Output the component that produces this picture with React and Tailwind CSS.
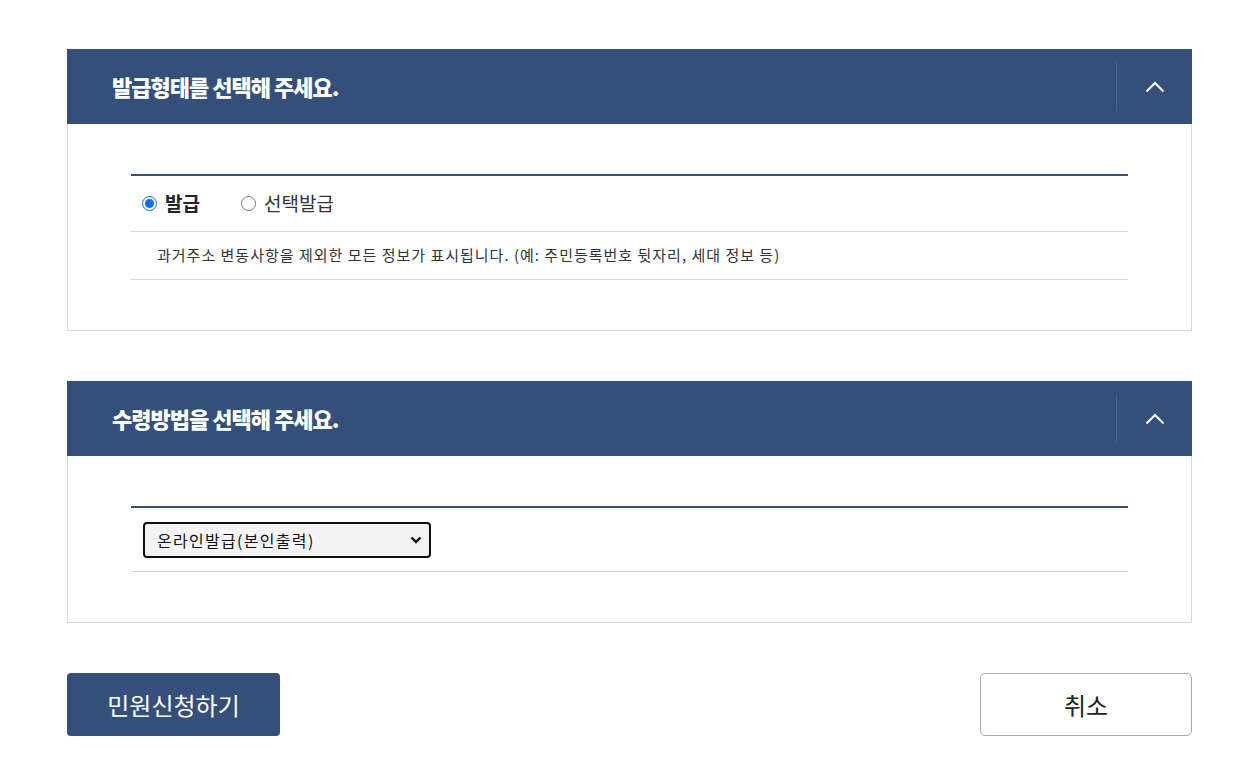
import { useState } from "react";

const font = { fontFamily: '"Noto Sans CJK KR", "Noto Sans", sans-serif' };

function Chevron() {
	return (
		<svg width="20" height="12" viewBox="0 0 20 12" fill="none">
			<path d="M1.5 10.5 L10 2 L18.5 10.5" stroke="white" strokeWidth="2" />
		</svg>
	);
}

function Section({ title, children }) {
	return (
		<section className="border border-[#d9d9d9] border-t-0">
			<div className="flex items-center justify-between h-[75px] bg-[#354f7b] -mx-px">
				<h2 className="pl-[45px] text-[22px] font-extrabold text-white tracking-[-1px]">{title}</h2>
				<div className="flex items-center h-full py-[13px]">
					<div className="w-px h-full bg-[#4a6290]" />
					<button className="w-[75px] h-full flex items-center justify-center">
						<Chevron />
					</button>
				</div>
			</div>
			<div className="px-[63px] pt-[50px] pb-[50px]">{children}</div>
		</section>
	);
}

export default function App() {
	const [type, setType] = useState("all");

	return (
		<div className="bg-white min-h-screen pl-[67px] pr-[60px] pt-[49px] pb-[39px] text-[#222]" style={font}>
			<div className="flex flex-col gap-[50px]">
				<Section title="발급형태를 선택해 주세요.">
					<div className="border-t-2 border-[#354f7b]">
						<div className="flex items-center gap-[41px] h-[56px] px-[11px] border-b border-[#d9d9d9]">
							<label className="flex items-center gap-[8px] text-[19px] font-bold">
								<input
									type="radio"
									name="type"
									checked={type === "all"}
									onChange={() => setType("all")}
									className="w-[15px] h-[15px] accent-[#0b6ef5]"
								/>
								발급
							</label>
							<label className="flex items-center gap-[8px] text-[19px] text-[#333]">
								<input
									type="radio"
									name="type"
									checked={type === "select"}
									onChange={() => setType("select")}
									className="w-[15px] h-[15px] accent-[#0b6ef5]"
								/>
								선택발급
							</label>
						</div>
						<div className="flex items-center h-[48px] px-[26px] border-b border-[#d9d9d9] text-[15px] tracking-[1px] text-[#333]">
							과거주소 변동사항을 제외한 모든 정보가 표시됩니다. (예: 주민등록번호 뒷자리, 세대 정보 등)
						</div>
					</div>
				</Section>

				<Section title="수령방법을 선택해 주세요.">
					<div className="border-t-2 border-[#354f7b]">
						<div className="flex items-center h-[64px] px-[12px] border-b border-[#d9d9d9]">
							<div className="relative">
								<select className="appearance-none w-[288px] h-[36px] border-2 border-[#111] rounded-[4px] bg-[#f4f4f4] px-[12px] text-[16px] tracking-[1.3px] text-[#111]">
									<option>온라인발급(본인출력)</option>
									<option>우편수령</option>
								</select>
								<svg className="absolute right-[9px] top-[14px] pointer-events-none" width="12" height="8" viewBox="0 0 12 8" fill="none">
									<path d="M1.5 1.5 L6 6 L10.5 1.5" stroke="#111" strokeWidth="2.4" />
								</svg>
							</div>
						</div>
					</div>
				</Section>
			</div>

			<div className="flex items-center justify-between mt-[50px]">
				<button className="w-[213px] h-[63px] rounded-[4px] bg-[#354f7b] text-white text-[24px]">
					민원신청하기
				</button>
				<button className="w-[212px] h-[63px] rounded-[5px] border border-[#aaa] bg-white text-[#222] text-[24px]">
					취소
				</button>
			</div>
		</div>
	);
}
